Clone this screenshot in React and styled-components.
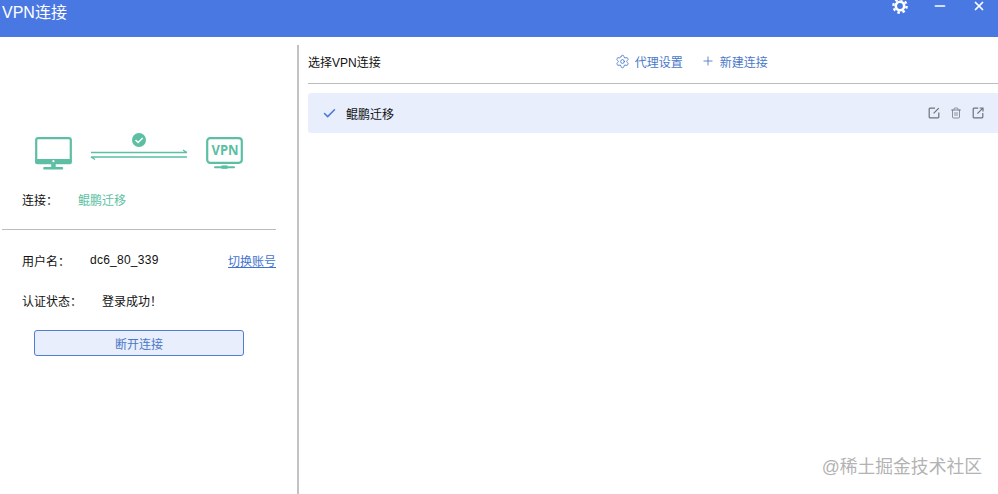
import styled, { createGlobalStyle } from "styled-components";
import { Settings, Plus, Check, Trash2, Minus, X } from "lucide-react";

const GlobalStyle = createGlobalStyle`
    html, body {
        margin: 0;
        padding: 0;
        background: #fff;
    }
    body {
        font-family: "Liberation Sans", "Noto Sans CJK SC", sans-serif;
        font-size: 12px;
        color: #111;
    }
`;

const Window = styled.div`
    position: relative;
    width: 998px;
    height: 494px;
    overflow: hidden;
    background: #fff;
`;

const TitleBar = styled.header`
    display: flex;
    justify-content: space-between;
    align-items: flex-start;
    height: 37px;
    padding-left: 2px;
    background: #4a78e3;
    color: #fff;
`;

const Title = styled.div`
    font-size: 16px;
    line-height: 26px;
`;

const WindowButtons = styled.div`
    display: flex;
    align-items: center;
    height: 12px;
    gap: 24px;
    padding-right: 12px;
`;

const Body = styled.main`
    display: flex;
    height: 449px;
    margin-top: 8px;
`;

const LeftPanel = styled.section`
    box-sizing: border-box;
    width: 299px;
    padding: 92px 0 0 2px;
    border-right: 2px solid #c2c2c2;
`;

const Diagram = styled.div`
    display: flex;
    align-items: flex-start;
    height: 44px;
    padding-left: 32px;
`;

const Link = styled.div`
    width: 98px;
    margin: -4px 18px 0 18px;
`;

const ConnectRow = styled.div`
    display: flex;
    align-items: center;
    height: 20px;
    margin-top: 8px;
    padding-left: 20px;
`;

const Label = styled.span`
    width: ${p => p.$w}px;
    flex: none;
`;

const ConnectName = styled.span`
    color: #5cbfa3;
`;

const Rule = styled.hr`
    width: 274px;
    height: 1px;
    margin: 20px 0 0;
    border: 0;
    background: #bcbcbc;
`;

const InfoRow = styled.div`
    display: flex;
    align-items: center;
    width: 254px;
    height: 20px;
    margin-top: ${p => p.$top}px;
    padding-left: 20px;
`;

const UserName = styled.span`
    letter-spacing: 0.25px;
    margin-left: -1px;
`;

const SwitchLink = styled.a`
    margin-left: auto;
    color: #3f73cf;
    text-decoration: underline;
    cursor: pointer;
`;

const Disconnect = styled.button`
    display: block;
    box-sizing: border-box;
    width: 210px;
    height: 26px;
    margin: 20px 0 0 32px;
    padding: 0;
    border: 1px solid #4f7ed6;
    border-radius: 3px;
    background: #e8eefc;
    color: #4a78c8;
    font: inherit;
    cursor: pointer;
`;

const RightPanel = styled.section`
    flex: 1;
    padding-left: 9px;
`;

const Toolbar = styled.div`
    display: flex;
    align-items: center;
    box-sizing: border-box;
    height: 39px;
    padding-bottom: 6px;
    border-bottom: 1px solid #bcbcbc;
`;

const ToolLinks = styled.div`
    display: flex;
    align-items: center;
    gap: 18px;
    margin-left: 234px;
`;

const ToolLink = styled.a`
    display: flex;
    align-items: center;
    gap: 5px;
    color: #4a78c8;
    cursor: pointer;
`;

const ConnectionRow = styled.div`
    display: flex;
    align-items: center;
    height: 40px;
    margin-top: 9px;
    padding: 0 14px 0 14px;
    background: #e8eefc;
    border-radius: 3px 0 0 3px;
`;

const ConnectionName = styled.span`
    margin-left: 9px;
`;

const RowActions = styled.div`
    display: flex;
    align-items: center;
    gap: 10px;
    margin-left: auto;
    color: #6f7278;
`;

const Watermark = styled.div`
    position: absolute;
    right: 16px;
    bottom: 16px;
    font-size: 17.8px;
    line-height: 22px;
    color: #b3b3b3;
`;

const HeaderGear = () => (
    <svg width="16" height="16" viewBox="0 0 16 16" fill="none">
        <circle cx="8" cy="8" r="4.2" stroke="#fff" strokeWidth="2.6" />
        <circle cx="8" cy="8" r="6.6" stroke="#fff" strokeWidth="2.4" strokeDasharray="2.6 2.58" />
    </svg>
);

const EditIcon = () => (
    <svg width="12" height="12" viewBox="0 0 12 12" fill="none" stroke="currentColor" strokeWidth="1.2">
        <path d="M7 1.2H1.9a.7.7 0 0 0-.7.7v8.2a.7.7 0 0 0 .7.7h8.2a.7.7 0 0 0 .7-.7V5.4" />
        <path d="M5.6 6.4L10.8 1.2" />
    </svg>
);

const ExportIcon = () => (
    <svg width="12" height="12" viewBox="0 0 12 12" fill="none" stroke="currentColor" strokeWidth="1.2">
        <path d="M6.2 1.2H1.9a.7.7 0 0 0-.7.7v8.2a.7.7 0 0 0 .7.7h8.2a.7.7 0 0 0 .7-.7V6" />
        <path d="M5.4 6.6L10.8 1.2M7.6 1h3.4v3.4" />
    </svg>
);

const Computer = () => (
    <svg width="38" height="33" viewBox="0 0 38 33" fill="none">
        <rect x="2.2" y="1.2" width="34.6" height="25" rx="2" stroke="#5cbfa3" strokeWidth="2.2" />
        <rect x="1.2" y="22" width="36.4" height="5" rx="1.5" fill="#5cbfa3" />
        <circle cx="19.4" cy="24.2" r="1.1" fill="#fff" />
        <rect x="17.2" y="27" width="4.5" height="3.5" fill="#5cbfa3" />
        <rect x="9.2" y="30" width="20" height="2.4" rx="1" fill="#5cbfa3" />
    </svg>
);

const ArrowLink = () => (
    <svg width="98" height="38" viewBox="0 0 98 38" fill="none" display="block">
        <circle cx="49" cy="7" r="7" fill="#5cbfa3" />
        <path d="M45.5 7l2.6 2.6 4.6-4.6" stroke="#fff" strokeWidth="1.4" />
        <path d="M1 19.5H97M97 19.5l-4-2.5" stroke="#5cbfa3" strokeWidth="1.4" />
        <path d="M97 24H1M1 24l4 2.5" stroke="#5cbfa3" strokeWidth="1.4" />
    </svg>
);

const VpnScreen = () => (
    <svg width="38" height="33" viewBox="0 0 38 33" fill="none">
        <rect x="1.2" y="1.2" width="34.6" height="24.6" rx="3" stroke="#5cbfa3" strokeWidth="2.2" />
        <text x="5.5" y="17.5" textLength="27" lengthAdjust="spacingAndGlyphs" fontFamily="'Open Sans', sans-serif" fontWeight="700" fontSize="15" fill="#5cbfa3">VPN</text>
        <rect x="8" y="29.2" width="21" height="2" rx="1" fill="#5cbfa3" />
        <rect x="15.5" y="28.4" width="6" height="3.4" fill="#5cbfa3" />
    </svg>
);

const App = () => {
    return (
        <Window>
            <GlobalStyle />
            <TitleBar>
                <Title>VPN连接</Title>
                <WindowButtons>
                    <HeaderGear />
                    <Minus size={16} strokeWidth={2.2} color="#fff" />
                    <X size={14} strokeWidth={3} color="#fff" />
                </WindowButtons>
            </TitleBar>
            <Body>
                <LeftPanel>
                    <Diagram>
                        <Computer />
                        <Link><ArrowLink /></Link>
                        <VpnScreen />
                    </Diagram>
                    <ConnectRow>
                        <Label $w={56}>连接：</Label>
                        <ConnectName>鲲鹏迁移</ConnectName>
                    </ConnectRow>
                    <Rule />
                    <InfoRow $top={20}>
                        <Label $w={69}>用户名：</Label>
                        <UserName>dc6_80_339</UserName>
                        <SwitchLink>切换账号</SwitchLink>
                    </InfoRow>
                    <InfoRow $top={20}>
                        <Label $w={80}>认证状态：</Label>
                        <span>登录成功！</span>
                    </InfoRow>
                    <Disconnect>断开连接</Disconnect>
                </LeftPanel>
                <RightPanel>
                    <Toolbar>
                        <span>选择VPN连接</span>
                        <ToolLinks>
                            <ToolLink><Settings size={15} strokeWidth={1.4} color="#4a78c8" />代理设置</ToolLink>
                            <ToolLink><Plus size={14} strokeWidth={1.5} color="#4a78c8" />新建连接</ToolLink>
                        </ToolLinks>
                    </Toolbar>
                    <ConnectionRow>
                        <Check size={15} strokeWidth={2.4} color="#4a78d8" />
                        <ConnectionName>鲲鹏迁移</ConnectionName>
                        <RowActions>
                            <EditIcon />
                            <Trash2 size={12} strokeWidth={1.5} />
                            <ExportIcon />
                        </RowActions>
                    </ConnectionRow>
                </RightPanel>
            </Body>
            <Watermark>@稀土掘金技术社区</Watermark>
        </Window>
    );
};

export default App;
